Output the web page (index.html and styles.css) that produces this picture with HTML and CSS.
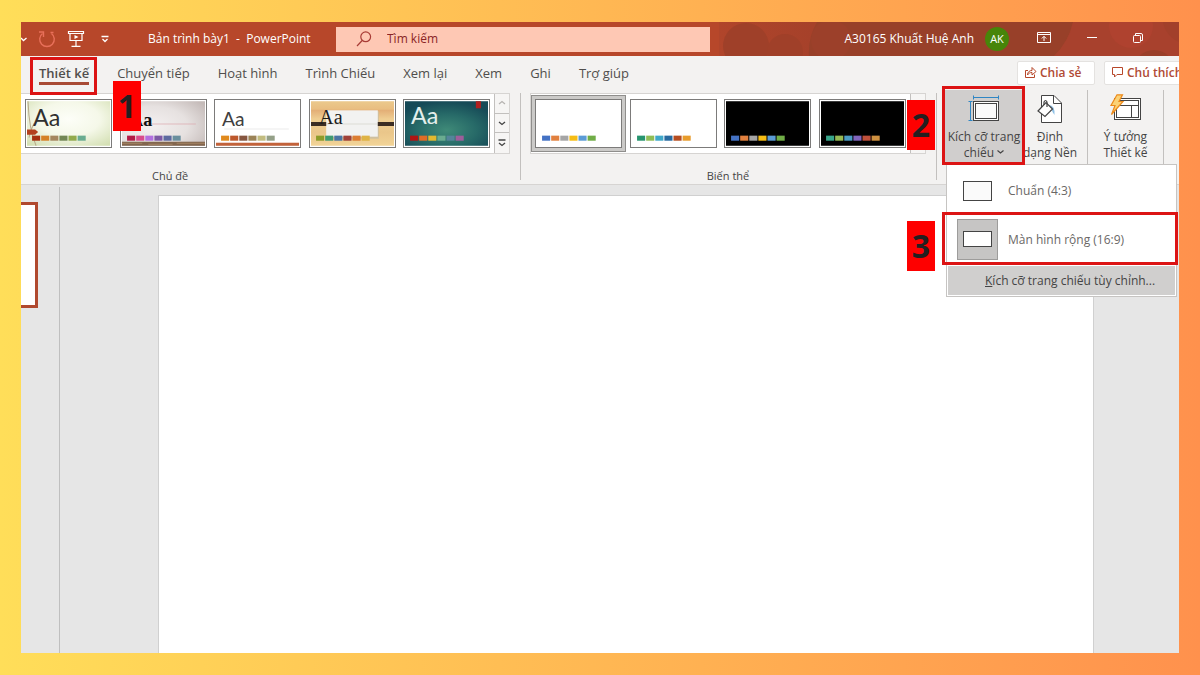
FILE: index.html
```html
<!DOCTYPE html>
<html lang="vi">
<head>
<meta charset="utf-8">
<meta name="viewport" content="width=device-width, initial-scale=1">
<title>Bản trình bày1 - PowerPoint</title>
<link rel="stylesheet" href="styles.css">
</head>
<body>
<div class="app">
  <header class="titlebar">
    <svg class="titlebar-art" viewBox="0 0 460 34" preserveAspectRatio="xMaxYMid slice" aria-hidden="true">
      <defs><linearGradient id="bar" x1="0" x2="1"><stop offset="0" stop-color="#b0452b"/><stop offset=".2" stop-color="#a6412a"/><stop offset="1" stop-color="#a3402a"/></linearGradient></defs>
      <rect width="460" height="34" fill="url(#bar)"/>
      <circle cx="27" cy="24" r="23" fill="#9f4029"/>
      <circle cx="66" cy="30" r="18" fill="#a04029"/>
      <path d="M98 0H354A66 66 0 0 1 335 34H90A60 60 0 0 1 98 0z" fill="#984029"/>
      <circle cx="112" cy="18" r="20" fill="#9c402a"/>
      <path d="M354 0H460V34H335A66 66 0 0 0 354 0z" fill="#a8412d"/>
      <circle cx="412" cy="4" r="22" fill="#af422f"/>
      <circle cx="435" cy="48" r="20" fill="#9a3f29"/>
      <path d="M444 0H460V20A26 26 0 0 1 444 0z" fill="#a2402b"/>
    </svg>
    <div class="quick">
      <button class="icon-btn" aria-label="Hoàn tác">
        <svg width="6" height="18" viewBox="0 0 6 18"><path d="M0 8l2.500 2.500L5.500 8" fill="none" stroke="#fff" stroke-width="1.300"/></svg>
      </button>
      <button class="icon-btn" aria-label="Làm lại">
        <svg width="18" height="18" viewBox="0 0 18 18"><g fill="none" stroke="#e8705a" stroke-width="1.400"><path d="M4.500 3.500A7.300 7.300 0 1 0 13.500 3.500"/><path d="M1 2H5.500V7M12.500 2.500h3"/></g></svg>
      </button>
      <button class="icon-btn" aria-label="Trình chiếu từ đầu">
        <svg width="18" height="18" viewBox="0 0 18 18"><g fill="none" stroke="#fff" stroke-width="1.200"><path d="M1.500 1.500h15v2h-15zM3 3.500V10.500H15V3.500M9 10.500V16M4.500 16.400h9"/><path d="M7.500 5l4 2-4 2z" fill="#fff" stroke="none"/></g></svg>
      </button>
      <button class="icon-btn" aria-label="Tùy chỉnh thanh công cụ">
        <svg width="10" height="18" viewBox="0 0 10 18"><path d="M1.500 6.500h7M2.500 9l2.500 2.500L7.500 9" fill="none" stroke="#fff" stroke-width="1.300"/></svg>
      </button>
    </div>
    <h1 class="doc-title">Bản trình bày1&nbsp; -&nbsp; PowerPoint</h1>
    <label class="search">
      <svg width="16" height="16" viewBox="0 0 16 16" aria-hidden="true"><g fill="none" stroke="#a83c36" stroke-width="1.200"><circle cx="9.700" cy="5.800" r="4.900"/><path d="M6.200 9.500L1 15"/></g></svg>
      <input type="search" placeholder="Tìm kiếm" aria-label="Tìm kiếm">
    </label>
    <div class="account">
      <span class="user">A30165 Khuất Huệ Anh</span>
      <button class="avatar">AK</button>
    </div>
    <div class="window-controls">
      <button class="icon-btn" aria-label="Tùy chọn hiển thị ruy-băng">
        <svg width="14" height="12" viewBox="0 0 14 12"><g fill="none" stroke="#fff"><path d="M.5.5h13v10H.5zM.5 2.500h13M7 9V4.500M4.800 6.500L7 4.300l2.200 2.200"/></g></svg>
      </button>
      <button class="icon-btn" aria-label="Thu nhỏ">
        <svg width="12" height="12" viewBox="0 0 12 12"><path d="M1 5.500h10" stroke="#fff"/></svg>
      </button>
      <button class="icon-btn" aria-label="Khôi phục">
        <svg width="12" height="12" viewBox="0 0 12 12"><g fill="none" stroke="#fff"><rect x="1.500" y="3.500" width="7" height="7" rx="1"/><path d="M3.500 3V1.500H9Q10.500 1.500 10.500 3V8.500H9"/></g></svg>
      </button>
    </div>
  </header>

  <nav class="tabs">
    <a class="tab tab-active" href="#design">Thiết kế<span class="outline outline-tab"></span><span class="step step-one">1</span></a>
    <a class="tab" href="#transitions">Chuyển tiếp</a>
    <a class="tab" href="#animations">Hoạt hình</a>
    <a class="tab" href="#slideshow">Trình Chiếu</a>
    <a class="tab" href="#review">Xem lại</a>
    <a class="tab" href="#view">Xem</a>
    <a class="tab" href="#record">Ghi</a>
    <a class="tab" href="#help">Trợ giúp</a>
    <div class="tab-actions">
      <button class="action">
        <svg width="13" height="13" viewBox="0 0 13 13" aria-hidden="true"><g fill="none" stroke="#b7472a"><path d="M4 4.500H1.500v7h9V8.500"/><path d="M3.500 9C3.500 6 5.500 4.500 8 4.500V1.500L12 5.500 8 9V6.500C6 6.500 4.500 7.300 3.500 9z"/></g></svg>
        Chia sẻ
      </button>
      <button class="action action-comment">
        <svg width="13" height="13" viewBox="0 0 13 13" aria-hidden="true"><path d="M1.500 1.500h10v7H6L3.500 11V8.500h-2z" fill="none" stroke="#b7472a"/></svg>
        Chú thích
      </button>
    </div>
  </nav>

  <section class="ribbon">
    <div class="group group-themes">
      <div class="gallery">
        <div class="thumbs">
          <button class="thumb" aria-label="Chủ đề Mảnh lá">
            <svg viewBox="0 0 82 44">
              <defs><radialGradient id="leaf" cx=".5" cy=".4" r=".75"><stop offset="0" stop-color="#fdfef8"/><stop offset=".5" stop-color="#f5f8e9"/><stop offset="1" stop-color="#d3dfb2"/></radialGradient></defs>
              <rect width="82" height="44" fill="url(#leaf)"/>
              <path d="M1 0Q2 28 9 44M7 22Q3 30 2 36" stroke="#b7a989" fill="none"/>
              <path d="M0 28h8l3 2.500L8 33H0z" fill="#b3401d"/>
              <text class="aa aa-light" x="6" y="24" fill="#303030">Aa</text>
              <g><rect x="5" y="34" width="8" height="5" fill="#a5300f"/><rect x="14" y="34" width="8" height="5" fill="#d58127"/><rect x="23" y="34" width="8" height="5" fill="#a5865f"/><rect x="32" y="34" width="8" height="5" fill="#728653"/><rect x="41" y="34" width="8" height="5" fill="#92aa4c"/><rect x="50" y="34" width="8" height="5" fill="#6aac90"/></g>
            </svg>
          </button>
          <button class="thumb" aria-label="Chủ đề Phòng trưng bày">
            <svg viewBox="0 0 82 44">
              <defs><radialGradient id="wall" cx=".35" cy=".55" r=".8"><stop offset="0" stop-color="#f4f0f0"/><stop offset=".55" stop-color="#e6e1e0"/><stop offset="1" stop-color="#c4bab8"/></radialGradient></defs>
              <rect width="82" height="44" fill="url(#wall)"/>
              <rect y="40" width="82" height="4" fill="#82664e"/>
              <path d="M0 41.500h20M26 42.500h24M54 41.500h28" stroke="#a58463"/>
              <path d="M13 22.500h60" stroke="#dca9ae" stroke-width=".7"/>
              <text class="aa aa-slab" x="8" y="24" fill="#111">Aa</text>
              <g><rect x="5" y="34" width="8" height="5" fill="#b31a46"/><rect x="14" y="34" width="8" height="5" fill="#d94b8c"/><rect x="23" y="34" width="8" height="5" fill="#b36fe0"/><rect x="32" y="34" width="8" height="5" fill="#7d58a5"/><rect x="41" y="34" width="8" height="5" fill="#5d699f"/><rect x="50" y="34" width="8" height="5" fill="#6a8f9e"/></g>
            </svg>
          </button>
          <button class="thumb" aria-label="Chủ đề Hồi tưởng">
            <svg viewBox="0 0 82 44">
              <rect width="82" height="44" fill="#fff"/>
              <path d="M8 27.500h64" stroke="#ececec"/>
              <rect y="41" width="82" height="3" fill="#c2623a"/>
              <text class="aa aa-plain" x="6" y="24" fill="#404040">Aa</text>
              <g><rect x="5" y="34" width="8" height="5" fill="#e08a1e"/><rect x="14" y="34" width="8" height="5" fill="#bd582c"/><rect x="23" y="34" width="8" height="5" fill="#865640"/><rect x="32" y="34" width="8" height="5" fill="#9b8357"/><rect x="41" y="34" width="8" height="5" fill="#c2bc80"/><rect x="50" y="34" width="8" height="5" fill="#94a088"/></g>
            </svg>
          </button>
          <button class="thumb" aria-label="Chủ đề Hữu cơ">
            <svg viewBox="0 0 82 44">
              <defs><linearGradient id="wood" x1="0" y1="0" x2="0" y2="1"><stop offset="0" stop-color="#ebc98d"/><stop offset=".18" stop-color="#e9bd80"/><stop offset=".2" stop-color="#e3ae76"/><stop offset=".4" stop-color="#efce92"/><stop offset=".7" stop-color="#eac68a"/><stop offset="1" stop-color="#f2d497"/></linearGradient></defs>
              <rect width="82" height="44" fill="url(#wood)"/>
              <rect x="16" y="10" width="51" height="27" fill="#cfc0a0"/>
              <rect x="15" y="9" width="51" height="26" fill="#f2f2f1"/>
              <path d="M15 22.500h51" stroke="#dcdcd5"/>
              <path d="M0 22.500h15M66 22.500h16" stroke="#3b2c22" stroke-width="4"/>
              <text class="aa aa-serif" x="8" y="23" fill="#1d1d1d">Aa</text>
              <g><rect x="5" y="34" width="8" height="5" fill="#8c9c2a"/><rect x="14" y="34" width="8" height="5" fill="#3f9a72"/><rect x="23" y="34" width="8" height="5" fill="#4a74a4"/><rect x="32" y="34" width="8" height="5" fill="#9f4039"/><rect x="41" y="34" width="8" height="5" fill="#dc7d32"/><rect x="50" y="34" width="8" height="5" fill="#dfb345"/></g>
            </svg>
          </button>
          <button class="thumb" aria-label="Chủ đề Ion">
            <svg viewBox="0 0 82 44">
              <defs><radialGradient id="ion" cx=".5" cy=".65" r=".65"><stop offset="0" stop-color="#3f8a78"/><stop offset=".55" stop-color="#276a68"/><stop offset="1" stop-color="#164a57"/></radialGradient></defs>
              <rect width="82" height="44" fill="url(#ion)"/>
              <rect x="70" y="0" width="5" height="7" fill="#b01f1f"/>
              <text class="aa aa-light" x="6" y="23" fill="#e4efec">Aa</text>
              <g><rect x="5" y="34" width="8" height="5" fill="#b01513"/><rect x="14" y="34" width="8" height="5" fill="#e06c25"/><rect x="23" y="34" width="8" height="5" fill="#e3b92f"/><rect x="32" y="34" width="8" height="5" fill="#6aac90"/><rect x="41" y="34" width="8" height="5" fill="#54849a"/><rect x="50" y="34" width="8" height="5" fill="#9e5e9b"/></g>
            </svg>
          </button>
        </div>
        <div class="scroller">
          <button aria-label="Lên" disabled><svg width="8" height="8" viewBox="0 0 8 8"><path d="M1 5l3-2.500L7 5" fill="none" stroke="#b5b3b1" stroke-width="1.200"/></svg></button>
          <button aria-label="Xuống"><svg width="8" height="8" viewBox="0 0 8 8"><path d="M1 3l3 2.500L7 3" fill="none" stroke="#444" stroke-width="1.300"/></svg></button>
          <button aria-label="Xem thêm chủ đề"><svg width="8" height="8" viewBox="0 0 8 8"><path d="M.5 1h7M1 4l3 2.500L7 4" fill="none" stroke="#444" stroke-width="1.300"/></svg></button>
        </div>
      </div>
      <h2 class="group-name group-name-start">Chủ đề</h2>
    </div>

    <div class="group group-variants">
      <div class="gallery">
        <div class="thumbs">
          <button class="thumb thumb-selected" aria-label="Biến thể 1">
            <svg viewBox="0 0 82 44"><rect width="82" height="44" fill="#fff"/><g><rect x="5" y="34" width="8" height="5" fill="#4472c4"/><rect x="14" y="34" width="8" height="5" fill="#e1803f"/><rect x="23" y="34" width="8" height="5" fill="#a5a5a5"/><rect x="32" y="34" width="8" height="5" fill="#f5bd16"/><rect x="41" y="34" width="8" height="5" fill="#5b9bd5"/><rect x="50" y="34" width="8" height="5" fill="#70ad47"/></g></svg>
          </button>
          <button class="thumb" aria-label="Biến thể 2">
            <svg viewBox="0 0 82 44"><rect width="82" height="44" fill="#fff"/><g><rect x="5" y="34" width="8" height="5" fill="#27946f"/><rect x="14" y="34" width="8" height="5" fill="#8fbd55"/><rect x="23" y="34" width="8" height="5" fill="#40a8c9"/><rect x="32" y="34" width="8" height="5" fill="#27699f"/><rect x="41" y="34" width="8" height="5" fill="#b54c20"/><rect x="50" y="34" width="8" height="5" fill="#e89c2c"/></g></svg>
          </button>
          <button class="thumb" aria-label="Biến thể 3">
            <svg viewBox="0 0 82 44"><rect width="82" height="44" fill="#000"/><g><rect x="5" y="34" width="8" height="5" fill="#4472c4"/><rect x="14" y="34" width="8" height="5" fill="#e1803f"/><rect x="23" y="34" width="8" height="5" fill="#a5a5a5"/><rect x="32" y="34" width="8" height="5" fill="#f5bd16"/><rect x="41" y="34" width="8" height="5" fill="#5b9bd5"/><rect x="50" y="34" width="8" height="5" fill="#70ad47"/></g></svg>
          </button>
          <button class="thumb" aria-label="Biến thể 4">
            <svg viewBox="0 0 82 44"><rect width="82" height="44" fill="#000"/><g><rect x="5" y="34" width="8" height="5" fill="#38a58a"/><rect x="14" y="34" width="8" height="5" fill="#95b954"/><rect x="23" y="34" width="8" height="5" fill="#4b9bc4"/><rect x="32" y="34" width="8" height="5" fill="#8165bd"/><rect x="41" y="34" width="8" height="5" fill="#bf503b"/><rect x="50" y="34" width="8" height="5" fill="#cf9140"/></g></svg>
          </button>
        </div>
        <div class="scroller">
          <button aria-label="Lên" disabled></button>
          <button aria-label="Xuống" disabled></button>
          <button aria-label="Xem thêm biến thể"></button>
        </div>
        <span class="step step-two">2</span>
      </div>
      <h2 class="group-name">Biến thể</h2>
    </div>

    <div class="group-tools">
      <div class="size-anchor">
        <button class="tool tool-open" aria-expanded="true">
          <svg width="34" height="30" viewBox="0 0 34 30" aria-hidden="true"><g fill="none" stroke="#2f86c4"><path d="M6 3.500h26M6.500 1.500v4M31.500 1.500v4M3.500 7v20M1.500 7.500h4M1.500 26.500h4"/></g><rect x="6.500" y="7.500" width="25" height="19" fill="#fff" stroke="#444"/><rect x="8.500" y="9.500" width="21" height="15" fill="#fafafa" stroke="#444"/></svg>
          <span>Kích cỡ trang<br>chiếu <svg width="7" height="6" viewBox="0 0 7 6"><path d="M.5 1.500l3 2.500 3-2.500" fill="none" stroke="#444" stroke-width="1.200"/></svg></span>
        </button>
        <span class="outline outline-tool"></span>
        <div class="menu">
          <button class="menu-item">
            <span class="ratio"><svg width="30" height="22" viewBox="0 0 30 22"><rect x=".5" y="1.500" width="28" height="19" fill="#fafafa" stroke="#444"/></svg></span>
            Chuẩn (4:3)
          </button>
          <button class="menu-item">
            <span class="ratio ratio-selected"><svg width="30" height="18" viewBox="0 0 30 18"><rect x=".5" y=".5" width="28" height="15" fill="#fff" stroke="#444"/></svg></span>
            Màn hình rộng (16:9)
            <span class="outline outline-item"></span>
            <span class="step step-three">3</span>
          </button>
          <button class="menu-custom"><span><u>K</u>ích cỡ trang chiếu tùy chỉnh...</span></button>
        </div>
      </div>
      <button class="tool tool-format">
        <svg width="28" height="30" viewBox="0 0 28 30" aria-hidden="true"><path d="M5.500 1.500H18L25.500 9V28.500H5.500z" fill="#fff" stroke="#444"/><path d="M17.500 1.500V9.500H25.500" fill="none" stroke="#444"/><path d="M13 11Q19 11 18.500 21Q16 18 15 13z" fill="#8fc1e6"/><path d="M2 17L10 8.500 16.500 15 9 22.500z" fill="#fff" stroke="#444" stroke-width="1.200"/><path d="M8 11V8Q9.500 5 11 8V13" fill="none" stroke="#444" stroke-width="1.200"/></svg>
        <span>Định<br>dạng Nền</span>
      </button>
      <button class="tool tool-ideas">
        <svg width="34" height="30" viewBox="0 0 34 30" aria-hidden="true"><rect x="5.500" y="4.500" width="26" height="21" fill="#fff" stroke="#444"/><rect x="7.500" y="6.500" width="22" height="17" fill="#fff" stroke="#444"/><path d="M7.500 11.500h22M22.500 11.500v12" stroke="#444"/><path d="M8 .8H13.500L10 7.500H14L2.500 20.500 6 11.500H2z" fill="#fbd276" stroke="#ed8b1c" stroke-width="1.200"/></svg>
        <span>Ý tưởng<br>Thiết kế</span>
      </button>
    </div>
  </section>

  <main class="workspace">
    <aside class="slides"><div class="slide-thumb"></div></aside>
    <div class="canvas"><div class="page"></div></div>
  </main>
</div>
</body>
</html>
```
FILE: styles.css
```css
* { box-sizing: border-box; }

body {
  margin: 0;
  min-height: 100vh;
  padding: 22px 21px;
  display: flex;
  background: linear-gradient(90deg, #ffde59, #ff914d);
  font-family: "Open Sans", "Noto Sans", sans-serif;
  font-size: 12px;
  line-height: 16px;
  color: #444;
}

button {
  margin: 0;
  padding: 0;
  border: 0;
  background: none;
  color: inherit;
  font: inherit;
}

svg { display: block; }

.app {
  flex: 1;
  min-width: 0;
  display: flex;
  flex-direction: column;
  overflow: hidden;
  background: #f3f2f1;
}

/* Title bar */
.titlebar {
  position: relative;
  display: flex;
  align-items: center;
  height: 34px;
  background: #b7472a;
  color: #fff;
}

.titlebar-art {
  position: absolute;
  top: 0;
  right: 0;
  width: 460px;
  height: 34px;
}

.titlebar > :not(.titlebar-art) { position: relative; }

.quick {
  display: flex;
  align-items: center;
  gap: 11px;
  width: 127px;
}

.quick .icon-btn:last-child { margin-left: 4px; }

.doc-title {
  width: 188px;
  margin: 0;
  font-size: 12px;
  font-weight: 400;
  white-space: nowrap;
}

.search {
  flex: 1;
  display: flex;
  align-items: center;
  gap: 15px;
  height: 25px;
  padding-left: 20px;
  background: #fec8b4;
}

.search input {
  flex: 1;
  min-width: 0;
  padding: 0;
  border: 0;
  outline: 0;
  background: none;
  font: inherit;
  color: #8a2525;
}

.search input::placeholder { color: #8a2525; opacity: 1; }

.account {
  display: flex;
  align-items: center;
  justify-content: flex-end;
  gap: 11px;
  width: 299px;
}

.user { white-space: nowrap; }

.avatar {
  width: 24px;
  height: 24px;
  border-radius: 50%;
  background: #478509;
  font-size: 11px;
}

.window-controls {
  display: flex;
  justify-content: space-between;
  width: 170px;
  padding: 0 35px 2px 28px;
}

/* Tabs */
.tabs {
  display: flex;
  align-items: center;
  gap: 28px;
  height: 37px;
  padding-left: 18px;
  padding-bottom: 4px;
  font-size: 13px;
}

.tab {
  position: relative;
  color: #504e4c;
  text-decoration: none;
  white-space: nowrap;
}

.tab-active { font-weight: 600; }

.tab-active::after {
  content: "";
  position: absolute;
  left: 0;
  right: 0;
  bottom: -4px;
  height: 3px;
  background: #a84a35;
}

.tab-actions {
  display: flex;
  gap: 9px;
  margin-left: auto;
  width: 162px;
  font-weight: 600;
  color: #b04a35;
}

.action {
  flex: none;
  display: flex;
  align-items: center;
  gap: 3px;
  height: 24px;
  width: 78px;
  padding-left: 6px;
  border: 1px solid #e4e2e0;
  border-radius: 2px;
  background: #fff;
  white-space: nowrap;
  font-size: 12px;
}

.action-comment { width: 92px; }

/* Ribbon */
.ribbon {
  display: flex;
  height: 92px;
  border-bottom: 1px solid #d6d4d2;
}

.group {
  display: flex;
  flex-direction: column;
  justify-content: space-between;
  margin-bottom: 4px;
  border-right: 1px solid #c2c0be;
  padding-right: 10px;
}

.group-themes { flex: 0 0 500px; }

.group-variants {
  flex: 1;
  padding-left: 9px;
}

.group-name {
  margin: 0 0 -4px;
  font-size: 11px;
  font-weight: 400;
  text-align: center;
  color: #444;
}

.group-name-start {
  padding-left: 131px;
  text-align: left;
}

.gallery {
  position: relative;
  display: flex;
  height: 61px;
  border: 1px solid #d6d4d2;
  background: #fff;
}

.group-themes .gallery { border-left: 0; }

.thumbs {
  flex: 1;
  display: flex;
  align-items: center;
  justify-content: space-between;
  padding: 0 4px;
}

.thumb {
  width: 87px;
  height: 49px;
  padding: 1px;
  border: 1px solid #7c7b7a;
  background: #fff;
}

.thumb svg {
  width: 100%;
  height: 100%;
}

.thumb-selected {
  outline: 3px solid #cbcac8;
  box-shadow: 0 0 0 4px #8f8e8c;
}

.aa-light { font-family: Lato, sans-serif; font-size: 23px; }
.aa-slab { font-family: "Liberation Serif", serif; font-weight: 700; font-size: 18px; }
.aa-plain { font-family: Lato, sans-serif; font-size: 19px; }
.aa-serif { font-family: "Liberation Serif", serif; font-size: 20px; }

.scroller {
  display: grid;
  grid-template-rows: repeat(3, 1fr);
  width: 15px;
}

.scroller button {
  display: grid;
  place-items: center;
  border-left: 1px solid #c2c0be;
  border-bottom: 1px solid #c2c0be;
  background: #f6f5f4;
}

.scroller button:last-child { border-bottom: 0; }

.group-tools {
  flex: 0 0 242px;
  display: flex;
  align-items: flex-start;
  margin-top: -3px;
  padding-left: 8px;
}

.size-anchor { position: relative; }

.tool {
  display: flex;
  flex-direction: column;
  align-items: center;
  gap: 5px;
  height: 75px;
  padding-top: 4px;
  text-align: center;
  white-space: nowrap;
}

.tool span svg {
  display: inline-block;
  vertical-align: 2px;
}

.tool-open {
  width: 78px;
  background: #d0cecd;
}

.tool-format {
  width: 65px;
  padding-right: 10px;
  border-right: 1px solid #c2c0be;
}

.tool-ideas {
  width: 76px;
  border-right: 1px solid #c2c0be;
}

/* Slide size menu */
.menu {
  position: absolute;
  z-index: 2;
  top: 74px;
  left: 1px;
  width: 231px;
  padding: 1px;
  border: 1px solid #c6c4c2;
  background: #fff;
}

.menu-item {
  position: relative;
  display: flex;
  align-items: center;
  gap: 10px;
  width: 100%;
  height: 49px;
  padding-left: 9px;
  color: #6a6866;
}

.ratio {
  display: grid;
  place-items: center;
  width: 41px;
  height: 41px;
}

.ratio-selected {
  border: 1px solid #9d9c9b;
  background: #c6c5c4;
}

.menu-custom {
  display: block;
  width: 100%;
  height: 29px;
  margin-top: 2px;
  padding-left: 37px;
  background: #d0cfce;
  text-align: left;
}

/* Step markers */
.outline {
  position: absolute;
  z-index: 3;
  border: 3px solid #dc1414;
  pointer-events: none;
}

.outline-tab { inset: -8px -8px -14px -9px; }
.outline-tool { inset: -4px -2px 0 -3px; }
.outline-item { inset: -3px -3px -1px -6px; }

.step {
  position: absolute;
  z-index: 4;
  display: grid;
  place-items: center;
  width: 28px;
  height: 50px;
  background: #fe0000;
  color: #231f20;
  font-family: "Open Sans", sans-serif;
  font-size: 32px;
  font-weight: 700;
  line-height: 50px;
}

.step-one { top: 16px; left: 74px; }
.step-two { top: 6px; right: -10px; }
.step-three { top: 6px; left: -41px; }

/* Workspace */
.workspace {
  flex: 1;
  display: flex;
  background: #e6e6e6;
}

.slides {
  width: 39px;
  margin-top: 2px;
  padding-top: 15px;
  border-right: 1px solid #bfbfbf;
}

.slide-thumb {
  width: 17px;
  height: 106px;
  border: 3px solid #b0492f;
  border-left: 0;
  background: #fff;
}

.canvas {
  flex: 1;
  display: flex;
  padding: 10px 85px 0 98px;
}

.page {
  flex: 1;
  border: 1px solid #d0d0d0;
  border-bottom: 0;
  background: #fff;
}
```
